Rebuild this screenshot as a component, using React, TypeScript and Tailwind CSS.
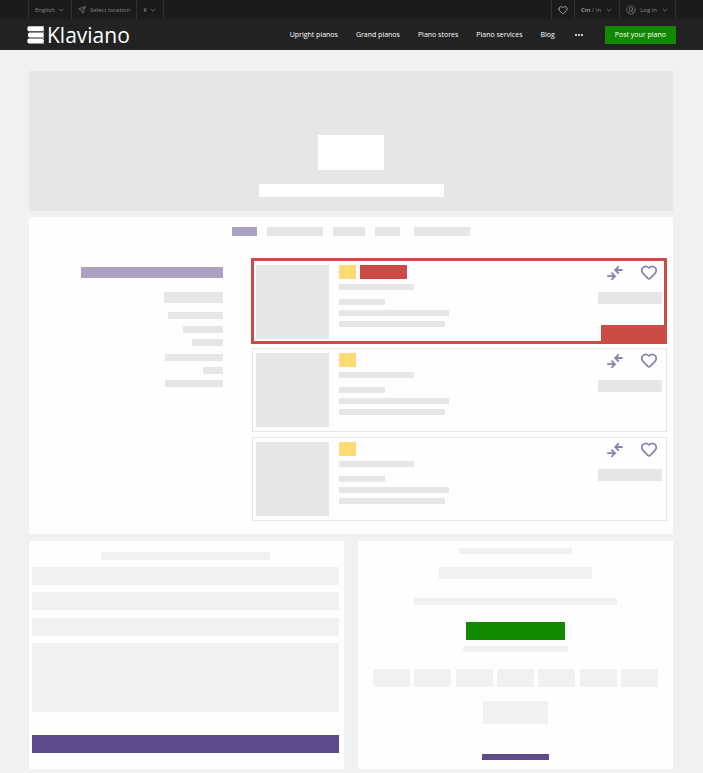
import type { ReactNode } from "react";
import clsx from "clsx";
import { ChevronDown, CircleUserRound, Heart, Send } from "lucide-react";

const navLinks = ["Upright pianos", "Grand pianos", "Piano stores", "Piano services", "Blog"];

function Logo() {
  return (
    <a href="#" className="flex items-center gap-0.5 text-white">
      <svg viewBox="0 0 18 18" className="size-[18px]" fill="currentColor" aria-hidden="true">
        <path d="M2 0.3H17.4L16.2 1.4L17.2 2.8L16.2 4.2L17.6 5.3H2C0.9 5.3 0.3 4.2 0.3 2.8S0.9 0.3 2 0.3Z" />
        <path d="M2.6 6.4H17.4L16.2 7.5L17.2 8.9L16.2 10.3L17.6 11.4H2.6C1.5 11.4 0.9 10.3 0.9 8.9S1.5 6.4 2.6 6.4Z" />
        <path d="M2 12.5H17.4L16.2 13.6L17.2 15L16.2 16.4L17.6 17.5H2C0.9 17.5 0.3 16.4 0.3 15S0.9 12.5 2 12.5Z" />
      </svg>
      <span className="text-[21px] leading-6 font-medium">Klaviano</span>
    </a>
  );
}

function TopItem({ children }: { children: ReactNode }) {
  return <div className="flex items-center border-l border-[#303030] px-1.5">{children}</div>;
}

function TopSelect({ label, options }: { label: string; options: string[] }) {
  return (
    <label className="flex items-center gap-0.5">
      <select aria-label={label} className="appearance-none bg-transparent outline-none">
        {options.map((o) => (
          <option key={o}>{o}</option>
        ))}
      </select>
      <ChevronDown className="size-2" />
    </label>
  );
}

function TopBar() {
  return (
    <div className="flex h-[19px] justify-between bg-[#1b1b1b] pr-[27px] pl-7 text-[6px] leading-[10px] text-[#858585]">
      <div className="flex border-r border-[#303030]">
        <TopItem>
          <TopSelect label="Language" options={["English"]} />
        </TopItem>
        <TopItem>
          <button className="flex items-center gap-1">
            <Send className="size-2" />
            Select location
          </button>
        </TopItem>
        <TopItem>
          <TopSelect label="Currency" options={["€"]} />
        </TopItem>
      </div>
      <div className="flex border-r border-[#303030]">
        <TopItem>
          <button aria-label="Favourites" className="text-[#bbb]">
            <Heart className="size-2.5" />
          </button>
        </TopItem>
        <TopItem>
          <button className="flex items-center gap-1">
            <span>
              <b className="font-semibold text-[#aaa]">Cm</b> / In
            </span>
            <ChevronDown className="size-2" />
          </button>
        </TopItem>
        <TopItem>
          <button className="flex items-center gap-1">
            <CircleUserRound className="size-2.5" strokeWidth={1.5} />
            Log in
            <ChevronDown className="size-2" />
          </button>
        </TopItem>
      </div>
    </div>
  );
}

function Header() {
  return (
    <header className="bg-[#222]">
      <TopBar />
      <div className="flex h-[31px] items-center justify-between pr-[27px] pl-[27px]">
        <Logo />
        <nav className="flex items-center gap-[18px] text-[7px] leading-[10px] font-medium text-white">
          {navLinks.map((link) => (
            <a key={link} href="#">
              {link}
            </a>
          ))}
          <button aria-label="More" className="mr-1 ml-0.5 flex gap-px">
            <span className="size-0.5 rounded-full bg-white" />
            <span className="size-0.5 rounded-full bg-white" />
            <span className="size-0.5 rounded-full bg-white" />
          </button>
          <button className="h-[18px] bg-[#128a00] px-2.5">Post your piano</button>
        </nav>
      </div>
    </header>
  );
}

function CompareIcon() {
  return (
    <svg viewBox="0 0 16 16" className="size-4" fill="none" stroke="currentColor" strokeWidth="1.8" aria-hidden="true">
      <path d="M15.6 5H8.6M11.8 1.4L8.2 5L11.8 8.6" />
      <path d="M0.2 11.2H7.4M4.4 7.6L8 11.2L4.4 14.8" />
    </svg>
  );
}

function Listing({ featured = false }: { featured?: boolean }) {
  return (
    <article
      className={clsx(
        "relative flex",
        featured ? "border-3 border-[#cb4b45] px-0.5 pt-1 pb-0.5" : "mb-px ml-px border border-[#e6e6e6] py-1 pr-1 pl-[3px]"
      )}
    >
      <div className="h-[74px] w-[73px] bg-[#e6e6e6]" />
      <div className="ml-2.5 flex-1">
        <div className="flex gap-1">
          <div className="h-3.5 w-[17px] bg-[#ffdb76]" />
          {featured && <div className="h-3.5 w-[47px] bg-[#cb4b45]" />}
        </div>
        <div className="mt-[5px] h-1.5 w-[75px] bg-[#e6e6e6]" />
        <div className="mt-[9px] h-1.5 w-[46px] bg-[#e6e6e6]" />
        <div className="mt-[5px] h-1.5 w-[110px] bg-[#e6e6e6]" />
        <div className="mt-[5px] h-1.5 w-[106px] bg-[#e6e6e6]" />
      </div>
      <div className="w-16">
        <div className="flex justify-end gap-[18px] pr-[5px] text-[#8b7fb5]">
          <button aria-label="Compare">
            <CompareIcon />
          </button>
          <button aria-label="Add to favourites">
            <Heart viewBox="1 2 22 22" className="size-4" strokeWidth={2.4} />
          </button>
        </div>
        <div className="mt-[11px] h-3 bg-[#e6e6e6]" />
      </div>
      {featured && <div className="absolute right-0 bottom-0 h-4 w-[63px] bg-[#cb4b45]" />}
    </article>
  );
}

function Filters() {
  return (
    <aside className="flex w-[194px] flex-col items-end pt-[9px]">
      <div className="h-[11px] w-[142px] bg-[#aca2c6]" />
      <div className="mt-3.5 h-[11px] w-[59px] bg-[#e6e6e6]" />
      <div className="mt-[9px] h-[7px] w-[55px] bg-[#e6e6e6]" />
      <div className="mt-[7px] h-[7px] w-10 bg-[#e6e6e6]" />
      <div className="mt-1.5 h-[7px] w-[31px] bg-[#e6e6e6]" />
      <div className="mt-2 h-[7px] w-[58px] bg-[#e6e6e6]" />
      <div className="mt-1.5 h-[7px] w-5 bg-[#e6e6e6]" />
      <div className="mt-1.5 h-[7px] w-[58px] bg-[#e6e6e6]" />
    </aside>
  );
}

function ContactPanel() {
  return (
    <section className="flex flex-col bg-[#fefefe] pt-[11px] pr-[5px] pb-4 pl-[3px]">
      <div className="h-2 w-[169px] self-center bg-[#f1f1f1]" />
      <div className="mt-[7px] h-[18px] bg-[#f1f1f1]" />
      <div className="mt-[7px] h-[18px] bg-[#f1f1f1]" />
      <div className="mt-2 h-[18px] bg-[#f1f1f1]" />
      <div className="mt-[7px] h-[69px] bg-[#f1f1f1]" />
      <div className="mt-[23px] h-[18px] bg-[#5f4b8b]" />
    </section>
  );
}

function PromoPanel() {
  return (
    <section className="flex flex-col items-center bg-[#fefefe] pt-[7px] pb-[9px]">
      <div className="h-1.5 w-[113px] bg-[#f1f1f1]" />
      <div className="mt-[13px] h-3 w-[153px] bg-[#f1f1f1]" />
      <div className="mt-[19px] h-[7px] w-[203px] bg-[#f1f1f1]" />
      <div className="mt-[17px] h-[18px] w-[99px] bg-[#128a00]" />
      <div className="mt-1.5 h-1.5 w-[105px] bg-[#f1f1f1]" />
      <div className="mt-[17px] flex w-[285px] justify-between">
        {Array.from({ length: 7 }, (_, i) => (
          <div key={i} className="h-[18px] w-[37px] bg-[#f1f1f1]" />
        ))}
      </div>
      <div className="mt-3.5 h-[23px] w-[65px] bg-[#f1f1f1]" />
      <div className="mt-[30px] h-1.5 w-[67px] bg-[#5f4b8b]" />
    </section>
  );
}

export default function App() {
  return (
    <div className="min-h-screen bg-[#f1f1f1] font-['Open_Sans',sans-serif]">
      <Header />
      <main className="pt-[21px] pr-[30px] pb-1 pl-[29px]">
        <section className="flex flex-col items-center bg-[#e6e6e6] pt-16 pb-3.5">
          <div className="h-[35px] w-[66px] bg-white" />
          <div className="mt-3.5 h-[13px] w-[185px] bg-white" />
        </section>

        <section className="mt-1.5 bg-[#fefefe] pt-2.5 pb-3">
          <div className="flex justify-center gap-2.5">
            <div className="h-[9px] w-[25px] bg-[#aca2c6]" />
            <div className="h-[9px] w-14 bg-[#e6e6e6]" />
            <div className="h-[9px] w-8 bg-[#e6e6e6]" />
            <div className="h-[9px] w-[25px] bg-[#e6e6e6]" />
            <div className="ml-1 h-[9px] w-14 bg-[#e6e6e6]" />
          </div>
          <div className="mt-[22px] flex gap-7 pr-1.5">
            <Filters />
            <div className="flex flex-1 flex-col gap-1">
              <Listing featured />
              <Listing />
              <Listing />
            </div>
          </div>
        </section>

        <div className="mt-[7px] grid grid-cols-2 gap-3.5">
          <ContactPanel />
          <PromoPanel />
        </div>
      </main>
    </div>
  );
}
